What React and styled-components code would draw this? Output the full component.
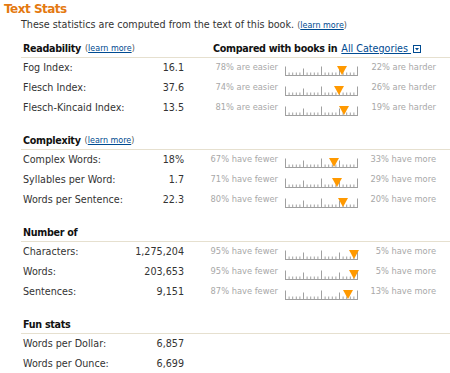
import React from 'react';
import styled, { createGlobalStyle } from 'styled-components';

const Global = createGlobalStyle`
  html, body { margin: 0; padding: 0; background: #fff; }
  body { font-family: "DejaVu Sans", Verdana, sans-serif; color: #333; }
`;

const Page = styled.div`
  width: 450px;
  height: 373px;
  overflow: hidden;
  box-sizing: border-box;
  padding: 1px 0 0 4px;
`;

const Title = styled.h2`
  margin: 0;
  font-size: 12px;
  letter-spacing: -0.5px;
  line-height: 17px;
  font-weight: bold;
  color: #e47911;
`;

const Intro = styled.p`
  margin: 0 0 0 17px;
  font-size: 9.6px;
  line-height: 14px;
  color: #333;
`;

const Small = styled.span`
  font-size: 8px;
  font-weight: normal;
  letter-spacing: 0;
  color: #555;
`;

const Link = styled.a`
  color: #004b91;
  text-decoration: underline;
  cursor: pointer;
`;

const Table = styled.div`
  margin-left: 17px;
`;

const Section = styled.section`
  margin-top: ${(p) => (p.$first ? 9 : 16)}px;
`;

const Header = styled.div`
  display: grid;
  grid-template-columns: 163px 1fr;
  padding-bottom: 1px;
  border-bottom: 1px solid #e6e0cf;
  font-size: 9.6px;
  line-height: 14px;
  font-weight: bold;
  letter-spacing: -0.3px;
  color: #111;
`;

const HeadCell = styled.div`
  padding-left: ${(p) => p.$pad}px;
  white-space: nowrap;
  display: flex;
  align-items: center;
`;

const CatLink = styled(Link)`
  font-weight: normal;
  letter-spacing: 0;
  font-size: 9.6px;
  margin-left: 4px;
`;

const DropIcon = styled.svg`
  margin-left: 2px;
  flex: none;
`;

const Row = styled.div`
  display: grid;
  grid-template-columns: 110px 53px 94px 80px 78px;
  box-sizing: border-box;
  height: 20px;
  padding-bottom: 2px;
  align-items: center;
  font-size: 9.6px;
`;

const Label = styled.div`
  padding-left: 2px;
  white-space: nowrap;
`;

const Value = styled.div`
  text-align: right;
  white-space: nowrap;
`;

const Pct = styled.div`
  text-align: right;
  font-size: 8.3px;
  color: #a8a8a8;
  white-space: nowrap;
`;

const Gauge = styled.div`
  position: relative;
  margin-left: 7px;
  width: 73px;
  height: 10px;
  align-self: start;
  margin-top: 8px;
`;

const Marker = styled.svg`
  position: absolute;
  top: 0;
  margin-left: -5px;
`;

const Ruler = () => {
  const ticks = [];
  for (let i = 0; i <= 20; i++) {
    const x = 0.5 + i * 3.6;
    const h = i % 10 === 0 ? 9 : i % 5 === 0 ? 7 : 3;
    ticks.push(<line key={i} x1={x} x2={x} y1={9.5 - h} y2={9.5} stroke="#a0a0a0" strokeWidth="1" />);
  }
  return (
    <svg width="73" height="10" style={{ display: 'block' }}>
      <line x1="0" x2="73" y1="9.5" y2="9.5" stroke="#a0a0a0" strokeWidth="1" />
      {ticks}
    </svg>
  );
};

const Meter = ({ pct }) => (
  <Gauge>
    <Ruler />
    <Marker width="10" height="9" style={{ left: `${0.5 + (pct / 100) * 72}px` }}>
      <polygon points="0,0 10,0 5,9" fill="#ff9900" />
    </Marker>
  </Gauge>
);

const sections = [
  {
    title: 'Readability',
    learn: true,
    compare: true,
    rows: [
      ['Fog Index:', '16.1', 78, 'are easier', 22, 'are harder'],
      ['Flesch Index:', '37.6', 74, 'are easier', 26, 'are harder'],
      ['Flesch-Kincaid Index:', '13.5', 81, 'are easier', 19, 'are harder'],
    ],
  },
  {
    title: 'Complexity',
    learn: true,
    rows: [
      ['Complex Words:', '18%', 67, 'have fewer', 33, 'have more'],
      ['Syllables per Word:', '1.7', 71, 'have fewer', 29, 'have more'],
      ['Words per Sentence:', '22.3', 80, 'have fewer', 20, 'have more'],
    ],
  },
  {
    title: 'Number of',
    rows: [
      ['Characters:', '1,275,204', 95, 'have fewer', 5, 'have more'],
      ['Words:', '203,653', 95, 'have fewer', 5, 'have more'],
      ['Sentences:', '9,151', 87, 'have fewer', 13, 'have more'],
    ],
  },
  {
    title: 'Fun stats',
    rows: [
      ['Words per Dollar:', '6,857'],
      ['Words per Ounce:', '6,699'],
    ],
  },
];

export default function App() {
  return (
    <Page>
      <Global />
      <Title>Text Stats</Title>
      <Intro>
        These statistics are computed from the text of this book.{' '}
        <Small>
          (<Link>learn more</Link>)
        </Small>
      </Intro>
      <Table>
        {sections.map((s, si) => (
          <Section key={s.title} $first={si === 0}>
            <Header>
              <HeadCell $pad={2}>
                {s.title}
                {s.learn && (
                  <Small style={{ marginLeft: 4 }}>
                    (<Link>learn more</Link>)
                  </Small>
                )}
              </HeadCell>
              {s.compare && (
                <HeadCell $pad={29}>
                  Compared with books in
                  <CatLink>All Categories&nbsp;</CatLink>
                  <DropIcon width="8" height="8" viewBox="0 0 8 8">
                    <rect x="0.5" y="0.5" width="7" height="7" fill="#fff" stroke="#004b91" />
                    <polygon points="2,3 6,3 4,5.5" fill="#004b91" />
                  </DropIcon>
                </HeadCell>
              )}
            </Header>
            {s.rows.map((r) => (
              <Row key={r[0]}>
                <Label>{r[0]}</Label>
                <Value>{r[1]}</Value>
                {r.length > 2 && (
                  <>
                    <Pct>{`${r[2]}% ${r[3]}`}</Pct>
                    <Meter pct={r[2]} />
                    <Pct>{`${r[4]}% ${r[5]}`}</Pct>
                  </>
                )}
              </Row>
            ))}
          </Section>
        ))}
      </Table>
    </Page>
  );
}
